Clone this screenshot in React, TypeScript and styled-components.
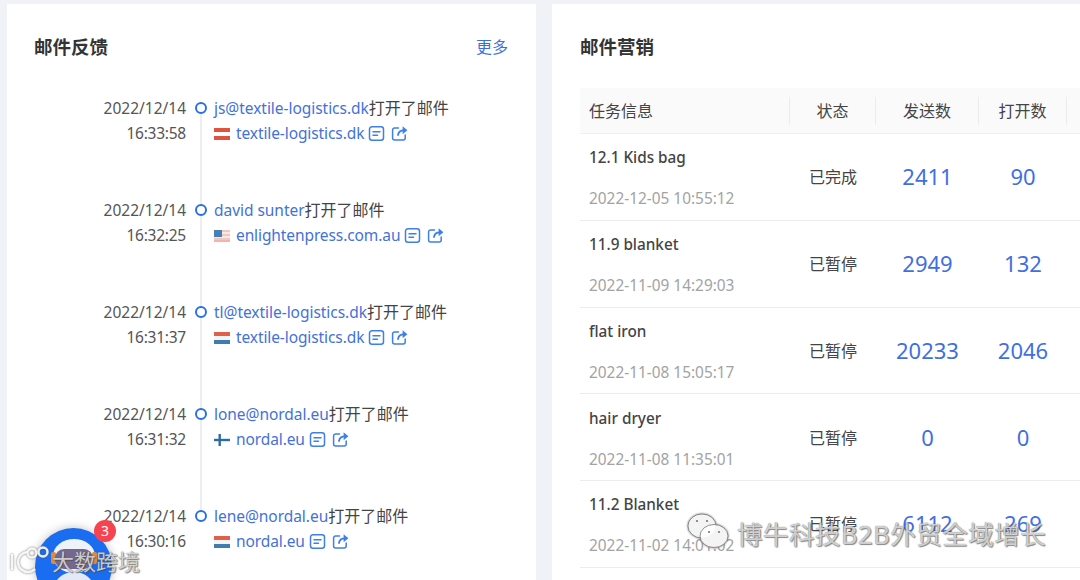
import React from 'react';
import styled, { createGlobalStyle } from 'styled-components';

const GlobalStyle = createGlobalStyle`
  html, body {
    margin: 0;
    padding: 0;
    background: #f0f2f8;
  }
  body {
    font-family: "Noto Sans", "Noto Sans CJK SC", sans-serif;
    color: #333;
  }
`;

// Page layout
const Page = styled.div`
  position: relative;
  width: 1080px;
  height: 580px;
  overflow: hidden;
  display: flex;
  gap: 16px;
  padding: 4px 0 0 7px;
  box-sizing: border-box;
`;

const Panel = styled.section<{ $width: number; $padLeft: number; $padRight: number }>`
  width: ${(p) => p.$width}px;
  flex: none;
  height: 620px;
  background: #fff;
  padding: 28px ${(p) => p.$padRight}px 0 ${(p) => p.$padLeft}px;
  box-sizing: border-box;
`;

const PanelHead = styled.div`
  display: flex;
  justify-content: space-between;
  align-items: center;
  height: 30px;
`;

const PanelTitle = styled.h2`
  margin: 0;
  font-size: 18.5px;
  line-height: 30px;
  font-weight: 700;
  color: #333;
`;

const MoreLink = styled.a`
  font-size: 16px;
  color: #3a6fe0;
  margin-bottom: 2px;
`;

// Timeline
const Timeline = styled.div`
  margin-top: 34px;
  display: flex;
  flex-direction: column;
`;

const Entry = styled.div`
  display: grid;
  grid-template-columns: 152px 30px 1fr;
  height: 102px;
  font-size: 15.5px;
  line-height: 25px;
`;

const When = styled.div`
  text-align: right;
  color: #555;
`;

const ClockTime = styled.span`
  letter-spacing: -0.25px;
`;

const Track = styled.div<{ $last?: boolean }>`
  position: relative;
  display: flex;
  justify-content: center;

  &::before {
    content: '';
    position: absolute;
    left: 50%;
    top: 12px;
    width: 2px;
    margin-left: -1px;
    height: 102px;
    background: #eceef2;
    display: ${(p) => (p.$last ? 'none' : 'block')};
  }
`;

const Dot = styled.span`
  position: relative;
  width: 12px;
  height: 12px;
  margin-top: 6px;
  border: 2.5px solid #2b6fe6;
  border-radius: 50%;
  background: #fff;
  box-sizing: border-box;
`;

const Detail = styled.div`
  margin-left: -2px;
`;

const Line = styled.div`
  display: flex;
  align-items: center;
  height: 25px;
  white-space: nowrap;
`;

const Blue = styled.span`
  color: #4472d8;
`;

const WhoName = styled(Blue)`
  letter-spacing: -0.04px;
`;

const SiteName = styled(Blue)`
  letter-spacing: -0.1px;
`;

const Opened = styled.span`
  font-size: 16px;
  color: #444;
`;

const FlagBox = styled.svg`
  width: 16px;
  height: 12px;
  margin-right: 6px;
  flex: none;
`;

const ActionIcon = styled.svg<{ $gap: number }>`
  width: 17px;
  height: 17px;
  margin-left: ${(p) => p.$gap}px;
  flex: none;
  color: #3f7fe8;
`;

const Flag: React.FC<{ kind: string }> = ({ kind }) => {
  if (kind === 'at') {
    return (
      <FlagBox viewBox="0 0 16 12">
        <rect width="16" height="4" fill="#e0533f" />
        <rect y="4" width="16" height="4" fill="#fff" />
        <rect y="8" width="16" height="4" fill="#e0533f" />
      </FlagBox>
    );
  }
  if (kind === 'nl') {
    return (
      <FlagBox viewBox="0 0 16 12">
        <rect width="16" height="4" fill="#e0604a" />
        <rect y="4" width="16" height="4" fill="#f4f4f4" />
        <rect y="8" width="16" height="4" fill="#3f7db0" />
      </FlagBox>
    );
  }
  if (kind === 'fi') {
    return (
      <FlagBox viewBox="0 0 16 12">
        <rect width="16" height="12" fill="#fff" />
        <rect y="4.8" width="16" height="2.4" fill="#2f6c9e" />
        <rect x="4.5" y="0" width="2.4" height="12" fill="#2f6c9e" />
      </FlagBox>
    );
  }
  return (
    <FlagBox viewBox="0 0 16 12">
      <rect width="16" height="12" fill="#f1c7c2" />
      <rect y="2" width="16" height="2" fill="#f6e9e8" />
      <rect y="6" width="16" height="2" fill="#f6e9e8" />
      <rect y="10" width="16" height="2" fill="#f0b5ad" />
      <rect width="8" height="7" fill="#4a7fb5" />
    </FlagBox>
  );
};

const NoteIcon = () => (
  <ActionIcon $gap={4} viewBox="0 0 17 17" fill="none" stroke="currentColor" strokeWidth="1.5" strokeLinecap="round">
    <rect x="1.5" y="1.8" width="14" height="13.4" rx="2.5" />
    <path d="M5 6.8h7M5 10.2h4.5" />
  </ActionIcon>
);

const ShareIcon = () => (
  <ActionIcon $gap={6} viewBox="0 0 17 17" fill="none" stroke="currentColor" strokeWidth="1.5" strokeLinecap="round" strokeLinejoin="round">
    <path d="M7.5 3H3.6a2 2 0 0 0-2 2v8a2 2 0 0 0 2 2h8.6a2 2 0 0 0 2-2v-3" />
    <path d="M7 10c.4-2.8 2.6-4.6 6-4.6" strokeWidth="1.8" />
    <path d="M11.6 1.2l4.8 4-4.8 4z" fill="currentColor" stroke="none" />
  </ActionIcon>
);

const entries = [
  { date: '2022/12/14', time: '16:33:58', who: 'js@textile-logistics.dk', flag: 'at', site: 'textile-logistics.dk' },
  { date: '2022/12/14', time: '16:32:25', who: 'david sunter', flag: 'us', site: 'enlightenpress.com.au' },
  { date: '2022/12/14', time: '16:31:37', who: 'tl@textile-logistics.dk', flag: 'nl', site: 'textile-logistics.dk' },
  { date: '2022/12/14', time: '16:31:32', who: 'lone@nordal.eu', flag: 'fi', site: 'nordal.eu' },
  { date: '2022/12/14', time: '16:30:16', who: 'lene@nordal.eu', flag: 'nl', site: 'nordal.eu' },
];

// Table
const Table = styled.div`
  margin-top: 26px;
  width: 560px;
`;

const columns = '210px 86px 103px 88px 73px';

const HeadRow = styled.div`
  display: grid;
  grid-template-columns: ${columns};
  height: 46px;
  align-items: center;
  background: #fafafa;
  border-bottom: 1px solid #f0f0f0;
  box-sizing: border-box;
  font-size: 16px;
  color: #444;
`;

const HeadCell = styled.div<{ $left?: boolean; $plain?: boolean }>`
  height: 28px;
  line-height: 28px;
  text-align: ${(p) => (p.$left ? 'left' : 'center')};
  padding-left: ${(p) => (p.$left ? '9px' : '0')};
  border-right: ${(p) => (p.$plain ? 'none' : '1px solid #ececec')};
  box-sizing: border-box;
`;

const Row = styled.div`
  display: grid;
  grid-template-columns: ${columns};
  height: 86.75px;
  align-items: center;
  border-bottom: 1px solid #ececec;
  box-sizing: border-box;
`;

const TaskInfo = styled.div`
  padding-left: 9px;
  margin-top: 3px;
  display: flex;
  flex-direction: column;
  gap: 20px;
`;

const TaskName = styled.div`
  font-size: 15.3px;
  line-height: 22px;
  font-weight: 500;
  color: #444;
`;

const TaskDate = styled.div`
  font-size: 15.4px;
  line-height: 22px;
  color: #a3a3a3;
`;

const Status = styled.div`
  text-align: center;
  font-size: 16px;
  margin-top: -1px;
  color: #444;
`;

const Count = styled.div`
  text-align: center;
  font-size: 22px;
  margin-top: -1px;
  color: #3f6fe0;
`;

const tasks = [
  { name: '12.1 Kids bag', date: '2022-12-05 10:55:12', status: '已完成', sent: '2411', open: '90' },
  { name: '11.9 blanket', date: '2022-11-09 14:29:03', status: '已暂停', sent: '2949', open: '132' },
  { name: 'flat iron', date: '2022-11-08 15:05:17', status: '已暂停', sent: '20233', open: '2046' },
  { name: 'hair dryer', date: '2022-11-08 11:35:01', status: '已暂停', sent: '0', open: '0' },
  { name: '11.2 Blanket', date: '2022-11-02 14:01:02', status: '已暂停', sent: '6112', open: '269' },
];

// Floating bits on top of the page
const Assistant = styled.div`
  position: absolute;
  left: 35px;
  top: 528px;
  width: 77px;
  height: 77px;
  border-radius: 50%;
  background: #1a6cf0;
  box-shadow: 0 0 10px rgba(0, 0, 0, 0.25);
  overflow: hidden;
`;

const AssistantFace = styled.svg`
  position: absolute;
  left: 15px;
  top: 11px;
  width: 48px;
  height: 48px;
`;

const Badge = styled.div`
  position: absolute;
  left: 94px;
  top: 520px;
  width: 22px;
  height: 22px;
  border-radius: 50%;
  background: #f5444f;
  color: #fff;
  font-size: 14px;
  line-height: 22px;
  text-align: center;
`;

const Watermark = styled.div<{ $size: number }>`
  position: absolute;
  font-size: ${(p) => p.$size}px;
  color: rgba(255, 255, 255, 0.72);
  text-shadow: 0 0 1px rgba(70, 70, 70, 0.95), 1px 1px 1px rgba(70, 70, 70, 0.6);
  white-space: nowrap;
  pointer-events: none;
`;

const WatermarkLeft = styled(Watermark)`
  left: 52px;
  top: 544px;
`;

const WatermarkRight = styled(Watermark)`
  left: 737px;
  top: 514px;
  letter-spacing: 0.5px;
`;

const WatermarkLogo = styled.svg<{ $left: number; $top: number; $w: number }>`
  position: absolute;
  left: ${(p) => p.$left}px;
  top: ${(p) => p.$top}px;
  width: ${(p) => p.$w}px;
  pointer-events: none;
  filter: drop-shadow(0 0 1px rgba(90, 90, 90, 0.9));
`;

const App: React.FC = () => {
  return (
    <>
      <GlobalStyle />
      <Page>
        <Panel $width={529} $padLeft={27} $padRight={28}>
          <PanelHead>
            <PanelTitle>邮件反馈</PanelTitle>
            <MoreLink>更多</MoreLink>
          </PanelHead>
          <Timeline>
            {entries.map((e, i) => (
              <Entry key={e.time}>
                <When>
                  {e.date}
                  <br />
                  <ClockTime>{e.time}</ClockTime>
                </When>
                <Track $last={i === entries.length - 1}>
                  <Dot />
                </Track>
                <Detail>
                  <Line>
                    <WhoName>{e.who}</WhoName>
                    <Opened>打开了邮件</Opened>
                  </Line>
                  <Line>
                    <Flag kind={e.flag} />
                    <SiteName>{e.site}</SiteName>
                    <NoteIcon />
                    <ShareIcon />
                  </Line>
                </Detail>
              </Entry>
            ))}
          </Timeline>
        </Panel>
        <Panel $width={528} $padLeft={28} $padRight={0}>
          <PanelHead>
            <PanelTitle>邮件营销</PanelTitle>
          </PanelHead>
          <Table>
            <HeadRow>
              <HeadCell $left>任务信息</HeadCell>
              <HeadCell>状态</HeadCell>
              <HeadCell>发送数</HeadCell>
              <HeadCell>打开数</HeadCell>
              <HeadCell $plain />
            </HeadRow>
            {tasks.map((t) => (
              <Row key={t.name}>
                <TaskInfo>
                  <TaskName>{t.name}</TaskName>
                  <TaskDate>{t.date}</TaskDate>
                </TaskInfo>
                <Status>{t.status}</Status>
                <Count>{t.sent}</Count>
                <Count>{t.open}</Count>
              </Row>
            ))}
          </Table>
        </Panel>
        <Assistant>
          <AssistantFace viewBox="0 0 48 48">
            <ellipse cx="24" cy="17" rx="21" ry="17" fill="#eef2f9" />
            <rect x="1" y="13" width="5" height="12" rx="2" fill="#e08a3c" />
            <rect x="42" y="13" width="5" height="12" rx="2" fill="#e08a3c" />
            <rect x="5" y="10" width="38" height="20" rx="9" fill="#75688f" />
            <ellipse cx="24" cy="50" rx="20" ry="17" fill="#e3e9f6" />
          </AssistantFace>
        </Assistant>
        <Badge>3</Badge>
        <WatermarkLogo $left={9} $top={546} $w={40} viewBox="0 0 40 28" fill="none" stroke="rgba(255,255,255,0.9)" strokeWidth="2.4">
          <path d="M3 8v16" />
          <path d="M18 6a10 10 0 0 0-9 10c0 6 5 10 10 10 3 0 5-1 7-3" />
          <circle cx="23" cy="7" r="4.5" />
          <circle cx="34" cy="6" r="4.5" />
        </WatermarkLogo>
        <WatermarkLeft $size={22}>大数跨境</WatermarkLeft>
        <WatermarkLogo $left={687} $top={513} $w={43} viewBox="0 0 43 36" fill="rgba(255,255,255,0.92)" stroke="rgba(110,110,110,0.75)" strokeWidth="1">
          <ellipse cx="15" cy="13" rx="14" ry="12" />
          <ellipse cx="27" cy="23" rx="14" ry="11.5" />
          <circle cx="10" cy="8" r="1.1" fill="rgba(90,90,90,0.8)" stroke="none" />
          <circle cx="20" cy="8" r="1.1" fill="rgba(90,90,90,0.8)" stroke="none" />
          <circle cx="22" cy="19" r="1.1" fill="rgba(90,90,90,0.8)" stroke="none" />
          <circle cx="32" cy="19" r="1.1" fill="rgba(90,90,90,0.8)" stroke="none" />
        </WatermarkLogo>
        <WatermarkRight $size={25.5}>博牛科技B2B外贸全域增长</WatermarkRight>
      </Page>
    </>
  );
};

export default App;
